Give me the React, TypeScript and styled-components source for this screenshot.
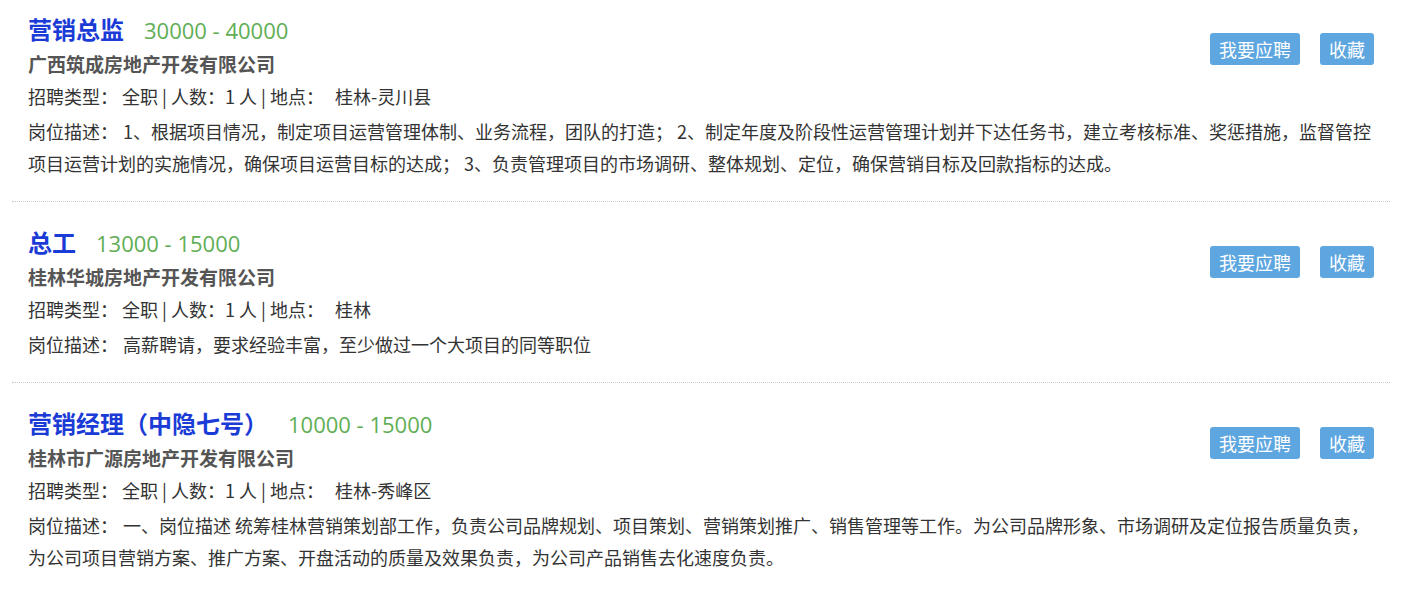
import styled, { createGlobalStyle } from 'styled-components'

type Job = {
  title: string
  salary: string
  company: string
  kind: string
  count: number
  place: string
  desc: string
}

const jobs: Job[] = [
  {
    title: '营销总监',
    salary: '30000 - 40000',
    company: '广西筑成房地产开发有限公司',
    kind: '全职',
    count: 1,
    place: '桂林-灵川县',
    desc: '1、根据项目情况，制定项目运营管理体制、业务流程，团队的打造； 2、制定年度及阶段性运营管理计划并下达任务书，建立考核标准、奖惩措施，监督管控项目运营计划的实施情况，确保项目运营目标的达成； 3、负责管理项目的市场调研、整体规划、定位，确保营销目标及回款指标的达成。',
  },
  {
    title: '总工',
    salary: '13000 - 15000',
    company: '桂林华城房地产开发有限公司',
    kind: '全职',
    count: 1,
    place: '桂林',
    desc: '高薪聘请，要求经验丰富，至少做过一个大项目的同等职位',
  },
  {
    title: '营销经理（中隐七号）',
    salary: '10000 - 15000',
    company: '桂林市广源房地产开发有限公司',
    kind: '全职',
    count: 1,
    place: '桂林-秀峰区',
    desc: '一、岗位描述 统筹桂林营销策划部工作，负责公司品牌规划、项目策划、营销策划推广、销售管理等工作。为公司品牌形象、市场调研及定位报告质量负责，为公司项目营销方案、推广方案、开盘活动的质量及效果负责，为公司产品销售去化速度负责。',
  },
]

const GlobalStyle = createGlobalStyle`
  html, body {
    margin: 0;
    padding: 0;
    background: #fff;
  }
  body {
    font-family: "Noto Sans CJK SC", "Microsoft YaHei", sans-serif;
    color: #333;
  }
`

export default function App() {
  return (
    <>
      <GlobalStyle />
      <JobList>
        {jobs.map((job) => (
          <JobItem key={job.title}>
            <Head>
              <Info>
                <TitleRow>
                  <Title>{job.title}</Title>
                  <Salary>{job.salary}</Salary>
                </TitleRow>
                <Company>{job.company}</Company>
                <Meta>
                  <Label $gap={4}>招聘类型：</Label>
                  {job.kind} | 人数：{job.count} 人 | <Label $gap={11}>地点：</Label>
                  {job.place}
                </Meta>
              </Info>
              <Actions>
                <ActionButton>我要应聘</ActionButton>
                <ActionButton>收藏</ActionButton>
              </Actions>
            </Head>
            <Desc>
              <Label $gap={5}>岗位描述：</Label>
              {job.desc}
            </Desc>
          </JobItem>
        ))}
      </JobList>
    </>
  )
}

const JobList = styled.div`
  margin: 0 11px 0 12px;
`

const JobItem = styled.div`
  padding: 20px 12px 22px 16px;
  border-bottom: 1px dotted #c8c8c8;

  &:first-child {
    padding-top: 9px;
  }
  &:last-child {
    border-bottom: none;
  }
`

const Head = styled.div`
  display: flex;
  justify-content: space-between;
  align-items: flex-start;
`

const Info = styled.div`
  display: flex;
  flex-direction: column;
`

const TitleRow = styled.div`
  display: flex;
  align-items: baseline;
  height: 40px;
  line-height: 40px;
`

const Title = styled.span`
  font-size: 24px;
  font-weight: bold;
  color: #1a3bd6;
`

const Salary = styled.span`
  margin-left: 20px;
  font-family: "Open Sans", "Noto Sans CJK SC", sans-serif;
  font-size: 22px;
  color: #5fae55;
`

const Company = styled.div`
  font-size: 19px;
  line-height: 30px;
  font-weight: bold;
  color: #555;
`

const Meta = styled.div`
  font-size: 18px;
  line-height: 34px;
`

const Label = styled.span<{ $gap: number }>`
  margin-right: ${(p) => p.$gap}px;
`

const Actions = styled.div`
  display: flex;
  gap: 20px;
  margin-top: 24px;
  margin-right: 4px;
`

const ActionButton = styled.button`
  height: 32px;
  padding: 0 9px;
  border: none;
  border-radius: 3px;
  background: #5da6df;
  color: #fff;
  font-family: "Noto Sans CJK SC", sans-serif;
  font-size: 18px;
  line-height: 32px;
  cursor: pointer;
`

const Desc = styled.div`
  padding-top: 2px;
  font-size: 18px;
  line-height: 32px;
`
